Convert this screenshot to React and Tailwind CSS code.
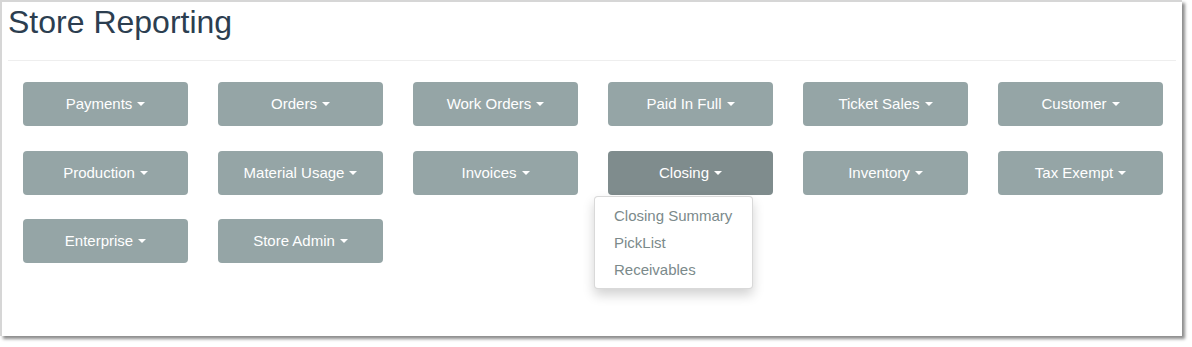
const rows = [
  ['Payments', 'Orders', 'Work Orders', 'Paid In Full', 'Ticket Sales', 'Customer'],
  ['Production', 'Material Usage', 'Invoices', 'Closing', 'Inventory', 'Tax Exempt'],
  ['Enterprise', 'Store Admin'],
]

const rowSpacing = ['', 'mt-[25px]', 'mt-[24px]']

const closingItems = ['Closing Summary', 'PickList', 'Receivables']

function Caret() {
  return (
    <span className="ml-[5px] inline-block h-0 w-0 border-x-[4px] border-t-[4px] border-x-transparent border-t-white align-middle" />
  )
}

function ReportButton({ label }) {
  const open = label === 'Closing'
  return (
    <div className="relative">
      <button
        type="button"
        className={
          open
            ? 'flex h-[44px] w-[165px] items-center justify-center rounded-[4px] bg-[#7f8c8d] text-[15px] text-white'
            : 'flex h-[44px] w-[165px] items-center justify-center rounded-[4px] bg-[#95a5a6] text-[15px] text-white'
        }
      >
        {label}
        <Caret />
      </button>
      {open && (
        <ul className="absolute left-[-14px] top-[45px] z-10 w-[159px] rounded-[4px] border border-[rgba(0,0,0,0.15)] bg-white py-[5px] shadow-[0_6px_12px_rgba(0,0,0,0.18)]">
          {closingItems.map((item) => (
            <li key={item} className="px-[19px] text-[15px] leading-[27px] text-[#7b8a8b]">
              {item}
            </li>
          ))}
        </ul>
      )}
    </div>
  )
}

export default function App() {
  return (
    <div className="h-[347px] w-[1192px] bg-white font-['Liberation_Sans',Arial,sans-serif]">
      <div className="h-[336px] w-[1182px] border-l-2 border-t-2 border-[#d6d6d6] bg-white px-[6px] shadow-[3px_3px_3px_rgba(0,0,0,0.45)]">
        <h1 className="pt-[1px] text-[32px] leading-[38px] text-[#2c3e50]">Store Reporting</h1>
        <hr className="mt-[19px] border-t border-[#eeeeee]" />
        <div className="flex flex-col pl-[15px] pt-[21px]">
          {rows.map((row, i) => (
            <div key={i} className={`flex gap-[30px] ${rowSpacing[i]}`}>
              {row.map((label) => (
                <ReportButton key={label} label={label} />
              ))}
            </div>
          ))}
        </div>
      </div>
    </div>
  )
}
